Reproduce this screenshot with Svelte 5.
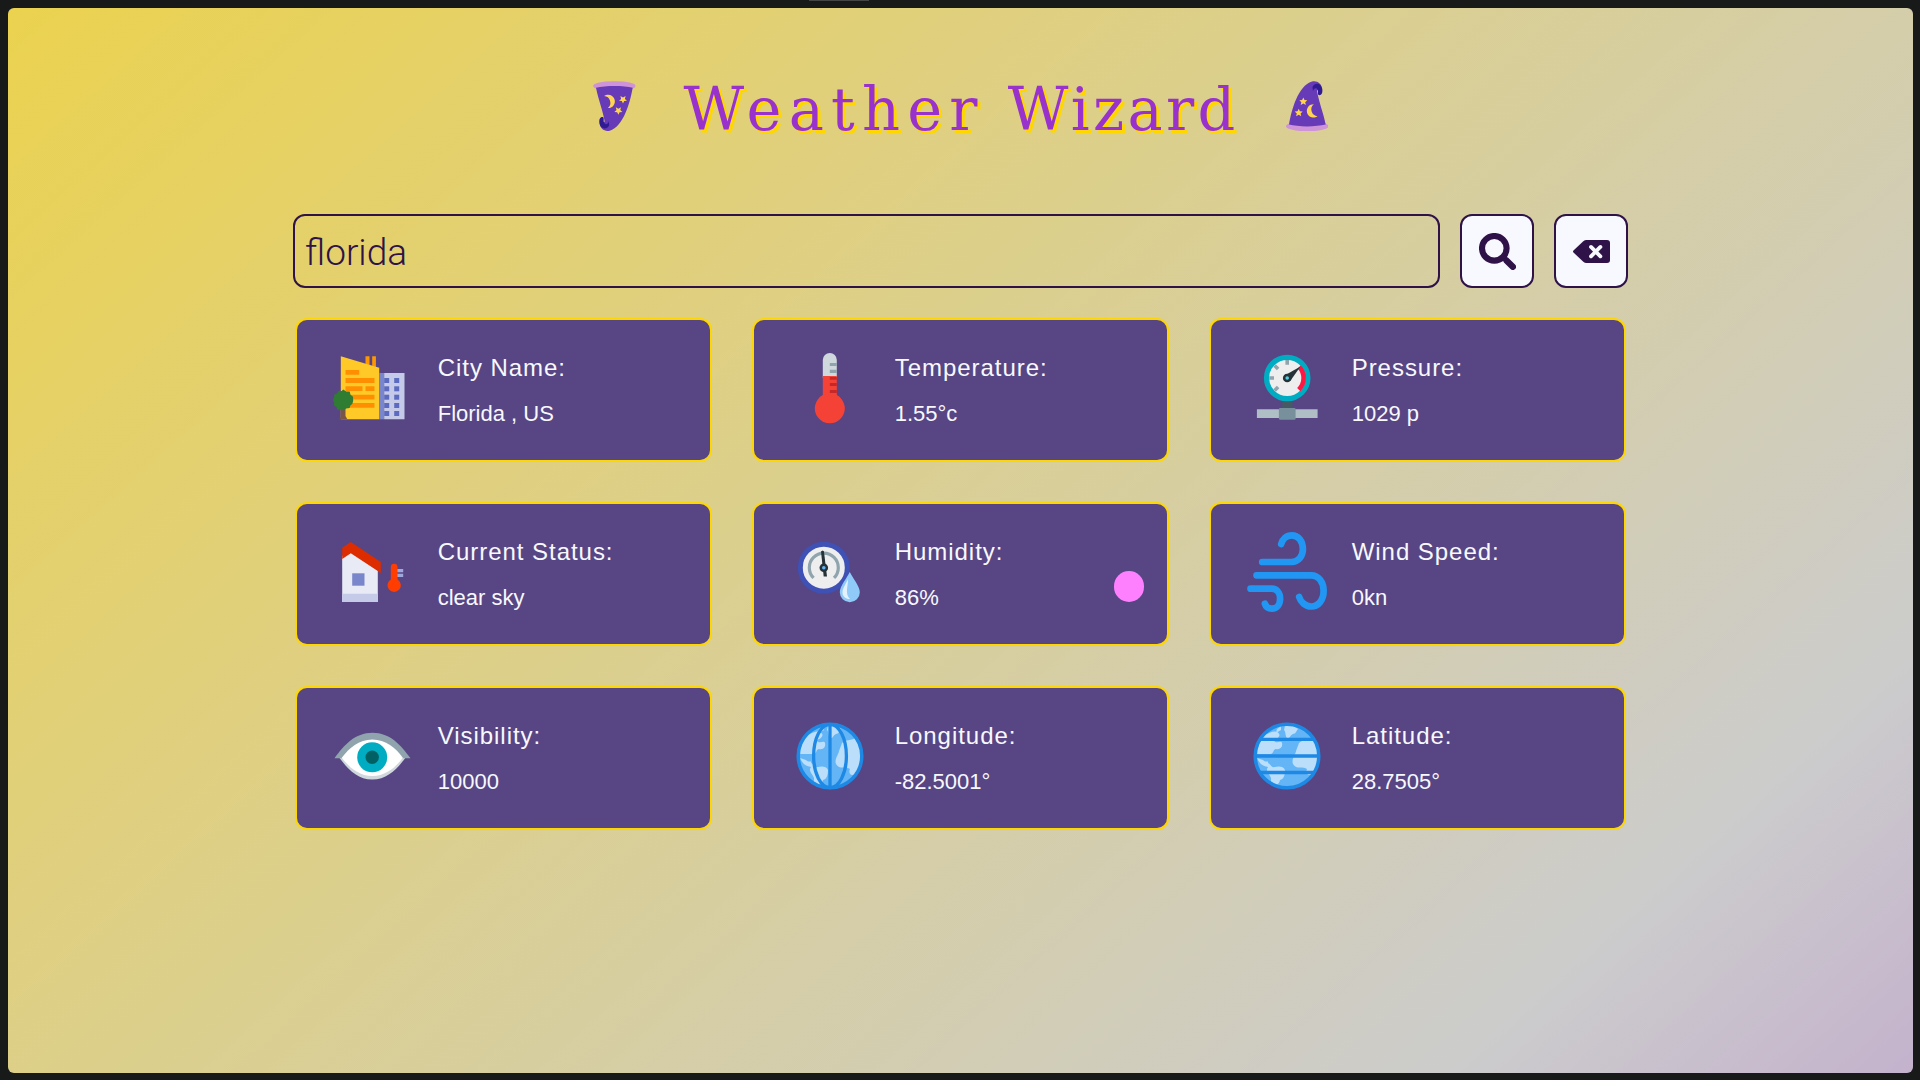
<script>
  let city = $state('florida');

  const cards = [
    { icon: 'city', label: 'City Name:', value: 'Florida , US' },
    { icon: 'temperature', label: 'Temperature:', value: '1.55°c' },
    { icon: 'pressure', label: 'Pressure:', value: '1029 p' },
    { icon: 'status', label: 'Current Status:', value: 'clear sky' },
    { icon: 'humidity', label: 'Humidity:', value: '86%' },
    { icon: 'wind', label: 'Wind Speed:', value: '0kn' },
    { icon: 'visibility', label: 'Visibility:', value: '10000' },
    { icon: 'longitude', label: 'Longitude:', value: '-82.5001°' },
    { icon: 'latitude', label: 'Latitude:', value: '28.7505°' },
  ];

  const floors = [30, 38.3, 46.7, 55, 63];
</script>

{#snippet star(x, y)}
  <path
    transform="translate({x} {y})"
    fill="#ffd54f"
    d="M0-4 1.2-1.4 4-1.2 1.9.7 2.6 3.5 0 2-2.6 3.5-1.9.7-4-1.2-1.2-1.4Z"
  />
{/snippet}

{#snippet hat(flipped)}
  <svg class="hat" class:flipped viewBox="0 0 42.7 50.3" aria-hidden="true">
    <ellipse cx="21.3" cy="45.3" rx="21.3" ry="5" fill="#ce93d8" />
    <path fill="#673ab7" d="M3 43.6C5.5 29 12 5 26 .6 31-.8 36 3 36 8L31 9.500C32.500 20 37.500 32 39.700 43.600 30 46 12 46 3 43.600Z" />
    <path fill="#311b92" d="M26.500 6C29 1 35 2 36.300 8 36.800 12 35.500 14.500 33 14.200 31 13.500 32.800 10.500 31.500 8.500 30.500 6.500 28 6.500 27 10Z" />
    <path fill="#ffd54f" d="M27.800 23.200A6.700 6.700 0 1 0 31.600 35.200 6.800 6.800 0 0 1 27.800 23.200Z" />
    {@render star(17.3, 20.5)}
    {@render star(12.7, 31.7)}
  </svg>
{/snippet}

{#snippet globe()}
  <circle cx="40" cy="40" r="31.700" fill="#64b5f6" />
  <g fill="#bbdefb">
    <path d="M18 19C13 25 10 32 10 38L24 38C27 37 26 33 29 33 33 34 36 31 35 27 34 24 30 28 27 25 27 23 32 23 32.500 19 31 14 25 15 18 19Z" />
    <path d="M10 42C13 48 15 50 21 51 18 55 22 57 24 62L24 66C29 70 32 69 33 64 37 63 38 59 38 54 37 50 31 50 28 51 24 52 24 48 21 47 22 44 18 47 16 44Z" />
    <path d="M52 27C56 23 61 25 65 22 74 36 72 49 65 58 61 61 58 57 60 53 57 50 49 54 46 48 44 43 49 38 49 35 50 32 51 30 52 27Z" />
    <path d="M38 9.500C43 8 48 10 51 13 49 15 49 18 46 18 43 19 43 23 40 22 38 20 39 16 37 14Z" />
    <path d="M30 13 34 10 34 14 29 17Z" />
  </g>
{/snippet}

{#snippet icon(name)}
  <svg class="icon" viewBox="0 0 80 80" aria-hidden="true">
    {#if name === 'city'}
      <path fill="#ff9800" d="M32.500 8.300h4v13h-4zM39.200 8.300h3.700v14h-3.700z" />
      <path fill="#ffca28" d="M7.800 8.300 46.200 19.700v51.600H7.800Z" />
      <path fill="#7986cb" d="M46.200 25h5v46.300h-5z" />
      <path fill="#c5cae9" d="M51.200 25h20.300v46.300H51.200z" />
      {#each floors as y}
        <rect x="51.200" {y} width="5" height="5" fill="#5c6bc0" />
        <rect x="61.200" {y} width="5" height="5" fill="#5c6bc0" />
      {/each}
      <path fill="#ff8f00" d="M12.500 22h13.700v4.800H12.500zM12.500 30h29v5h-29zM12.500 38.300h17v4.800h-17zM32.500 38.300h9v4.800h-9zM12.500 46.700h29v4.800h-29zM12.500 55h29v4.800h-29z" />
      <path fill="#795548" d="M7.800 60h4.700v8l1.800 3.300H6L7.800 69Z" />
      <path fill="#2e7d32" d="M10.200 41.500l3 2h3.500l.8 3.200 2.500 2 .2 4-.8 3-2 1.800-.8 2.500-3.500.5-2.600 2-3-1-3 .4-1-2.800-2.700-1.500.5-3-1.500-2.300 1.300-2.700.2-3.100 2.900-.9 1.500-2.800 3 .3Z" />
    {:else if name === 'temperature'}
      <path fill="#cfd8dc" d="M32.800 30V12a7 7 0 0 1 14 0v18Z" />
      <path fill="#f44336" d="M32.800 28h14v19.100a15 15 0 1 1-14 0Z" />
      <path fill="#90a4ae" d="M39.800 15h7v3h-7zM39.800 21.800h7V25h-7z" />
      <path fill="#c62828" d="M39.800 29h7v2.800h-7zM39.800 35h7v3h-7zM39.800 42h7v3h-7z" />
    {:else if name === 'pressure'}
      <path fill="#455a64" d="M35.200 51h10.300v10H35.200z" />
      <path fill="#b0bec5" d="M9.900 61.300h60.700V70H9.900z" />
      <rect x="31.900" y="60" width="16.700" height="11.700" rx="1.200" fill="#78909c" />
      <circle cx="40.200" cy="30" r="20.700" fill="#eee" stroke="#00acc1" stroke-width="5.200" />
      <path stroke="#90a4ae" stroke-width="3.600" d="M40.200 12v4.800M22.200 30H27M27.600 17.400l3.500 3.500M27.600 42.600l3.500-3.500" />
      <path fill="none" stroke="#ff1744" stroke-width="4.600" d="M52.200 18.900A16.300 16.300 0 0 1 51.800 41.600" />
      <path fill="#263238" d="M53.500 18.500 43.200 33 37.500 27.500Z" />
      <circle cx="40.200" cy="30" r="4.300" fill="#263238" />
      <circle cx="40.200" cy="30" r="1.800" fill="#4dd0e1" />
    {:else if name === 'status'}
      <path fill="#e8eaf6" d="M9.200 24 17.800 18 44.800 36v34H9.200Z" />
      <path fill="#c5cae9" d="M9.200 61.700h35.600V70H9.200z" />
      <path fill="#dd2c00" d="M9.200 15.700 17.800 10l30 20v11l-30-19.700L9.200 27Z" />
      <path fill="#7986cb" d="M19.200 41.300h12.300v12.400H19.200z" />
      <path fill="#9fa8da" d="M64 37h6.200v3.300H64zM64 41.700h6.200V45H64z" />
      <path fill="#ff3d00" d="M57.800 35a3.350 3.350 0 0 1 6.700 0v12.500a6.700 6.700 0 1 1-6.700 0Z" />
    {:else if name === 'humidity'}
      <circle cx="33.800" cy="35.700" r="23.500" fill="#eee" stroke="#3f51b5" stroke-width="5" />
      <path fill="none" stroke="#90a4ae" stroke-width="3.200" d="M23.600 45.900A14.500 14.500 0 1 1 44 45.900" />
      <path fill="#263238" d="M31 19.500 32.500 18.500 33.900 19.300 37 44.500H33.700Z" />
      <circle cx="33.800" cy="35.700" r="4.300" fill="#263238" />
      <circle cx="33.800" cy="35.700" r="1.800" fill="#64b5f6" />
      <path fill="#90caf9" d="M59.800 40C57 46 49.800 54 49.800 60.300a10 10 0 0 0 20 0C69.800 54 62.600 46 59.800 40Z" />
      <path fill="#e3f2fd" d="M58 47C56 52 52.500 56 52.500 60.500 52.500 64.500 56 67.200 60 67 54.500 62 58.200 54 58 47Z" />
    {:else if name === 'wind'}
      <g fill="none" stroke="#2196f3" stroke-width="6.700" stroke-linecap="round">
        <path d="M15.200 30H44.500C51.500 30 55.900 24 55.900 17.300 55.900 9 51 3.400 44.900 3.400 39.500 3.400 35.500 7 34.200 12" />
        <path d="M9.500 43.300H64.200C71.500 43.300 76.600 50 76.600 58.700 76.600 68 71.500 74.500 64.200 74.500 58.500 74.500 53.500 70 52.200 65" />
        <path d="M3.500 56.700H24.900C29.800 56.700 33.100 61 33.100 66.700 33.100 72.400 29.800 76.600 24.900 76.600 21.500 76.600 18.800 74.700 17.900 71.700" />
      </g>
    {:else if name === 'visibility'}
      <path fill="#cfd8dc" d="M5.800 41C14 52 24 63.600 39.200 63.600S65 52 73 41Z" />
      <path fill="#90a4ae" d="M1.500 42.300C11 29 22 16.700 39.500 16.700S68 29 77.500 42.300H70L39.500 30 9 42.300Z" />
      <path fill="#fff" d="M8.800 41.700C16 32 26 23.400 39.300 23.400S63 32 69.800 41.700C63 51 53 60 39.300 60S16 51 8.800 41.700Z" />
      <circle cx="39.200" cy="41.300" r="15" fill="#00acc1" />
      <circle cx="39.200" cy="41.300" r="6.700" fill="#006064" />
    {:else if name === 'longitude'}
      {@render globe()}
      <g fill="none" stroke="#1e88e5" stroke-width="3.300">
        <ellipse cx="40" cy="40" rx="16.400" ry="31.700" />
        <path d="M40 8v64" />
        <circle cx="40" cy="40" r="31.800" stroke-width="3.500" />
      </g>
    {:else}
      {@render globe()}
      <g fill="none" stroke="#1e88e5" stroke-width="3.300">
        <path d="M12.500 23.300h55M8 40h64M12.500 56.500h55" />
        <circle cx="40" cy="40" r="31.800" stroke-width="3.500" />
      </g>
    {/if}
  </svg>
{/snippet}

<div class="shell">
  <div class="tab-edge"></div>
  <div class="page">
    <header>
      {@render hat(true)}
      <h1><span class="wide">Weather</span> <span>Wizard</span></h1>
      {@render hat(false)}
    </header>

    <form class="search" onsubmit={(e) => e.preventDefault()}>
      <input type="text" bind:value={city} aria-label="City" />
      <button type="submit" aria-label="Search">
        <svg class="glyph" viewBox="0 0 37 37">
          <circle cx="15.300" cy="15.300" r="12.300" fill="none" stroke="#2e1248" stroke-width="6.100" />
          <path d="M24 24 28 28" stroke="#2e1248" stroke-width="5" />
          <path d="M27.700 27.700 33.800 33.800" stroke="#2e1248" stroke-width="6.400" stroke-linecap="round" />
        </svg>
      </button>
      <button type="button" aria-label="Clear" onclick={() => (city = '')}>
        <svg class="glyph" viewBox="0 0 37 37">
          <path fill="#2e1248" d="M.5 17.500 10.300 8.200Q11.700 7 13.500 7H34Q37 7 37 10V27Q37 30 34 30H13.500Q11.700 30 10.300 28.700L.5 19.500Q-.5 18.500.5 17.500Z" />
          <path d="M18 13.900 27.400 23.300M27.400 13.900 18 23.300" stroke="#f8f8ff" stroke-width="3.800" stroke-linecap="round" />
        </svg>
      </button>
    </form>

    <main>
      {#each cards as card}
        <article>
          {@render icon(card.icon)}
          <div class="text">
            <h2>{card.label}</h2>
            <p>{card.value}</p>
          </div>
        </article>
      {/each}
    </main>
  </div>
  <div class="cursor"></div>
</div>

<style>
  :global(body) {
    margin: 0;
    background: #181a19;
  }

  .shell {
    position: relative;
    box-sizing: border-box;
    width: 1920px;
    height: 1080px;
    padding: 8px 7px 7px 8px;
    overflow: hidden;
    background: #181a19;
    font-family: 'Liberation Sans', Arial, sans-serif;
  }

  .tab-edge {
    position: absolute;
    top: 0;
    left: 809px;
    width: 60px;
    height: 1px;
    background: #444645;
  }

  .page {
    box-sizing: border-box;
    height: 1065px;
    padding-top: 62px;
    border-radius: 6px;
    background: linear-gradient(138deg, #ebd24f 0%, #cccccc 85%, #c4b2cc 100%);
  }

  header {
    display: flex;
    align-items: center;
    justify-content: center;
    gap: 48px;
    height: 72px;
  }

  .hat {
    width: 42.7px;
    height: 50.3px;
  }

  .hat.flipped {
    transform: rotate(180deg);
  }

  h1 {
    box-sizing: border-box;
    margin: 0;
    padding-top: 7px;
    width: 554px;
    color: #9932cc;
    font-family: 'DejaVu Serif', serif;
    font-size: 59px;
    font-weight: 400;
    line-height: 72px;
    letter-spacing: 3.400px;
    word-spacing: 0.800px;
    white-space: nowrap;
    text-shadow: 3px 3px 0 #ffd700;
  }

  .wide {
    letter-spacing: 7.200px;
  }

  .search {
    display: flex;
    gap: 20px;
    width: 1335px;
    height: 74px;
    margin: 72px auto 30px;
  }

  input {
    flex: 1;
    box-sizing: border-box;
    min-width: 0;
    padding: 3px 10px 0;
    border: 2px solid #2e1248;
    border-radius: 12px;
    outline: none;
    background: transparent;
    color: #2e1248;
    font-family: Roboto, sans-serif;
    font-size: 37px;
    font-weight: 300;
  }

  button {
    display: flex;
    align-items: center;
    justify-content: center;
    box-sizing: border-box;
    width: 74px;
    padding: 0;
    border: 2px solid #2e1248;
    border-radius: 12px;
    background: #f8f8ff;
  }

  .glyph {
    width: 37px;
    height: 37px;
  }

  main {
    display: grid;
    grid-template-columns: repeat(3, 1fr);
    grid-auto-rows: 144px;
    gap: 40px;
    width: 1331px;
    margin: 0 auto;
  }

  article {
    display: flex;
    gap: 24.700px;
    box-sizing: border-box;
    padding: 28px 0 0 36px;
    border: 2px solid #ffd700;
    border-radius: 12px;
    background: #574683;
    color: #f8f8ff;
  }

  .icon {
    flex: none;
    width: 80px;
    height: 80px;
  }

  h2 {
    margin: 6px 0 19px;
    font-size: 24px;
    font-weight: 400;
    line-height: 28px;
    letter-spacing: 0.960px;
  }

  p {
    margin: 0;
    font-size: 22px;
    line-height: 26px;
  }

  .cursor {
    position: absolute;
    top: 571px;
    left: 1113.500px;
    width: 30.500px;
    height: 30.500px;
    border-radius: 50%;
    background: #ff80ff;
  }
</style>
